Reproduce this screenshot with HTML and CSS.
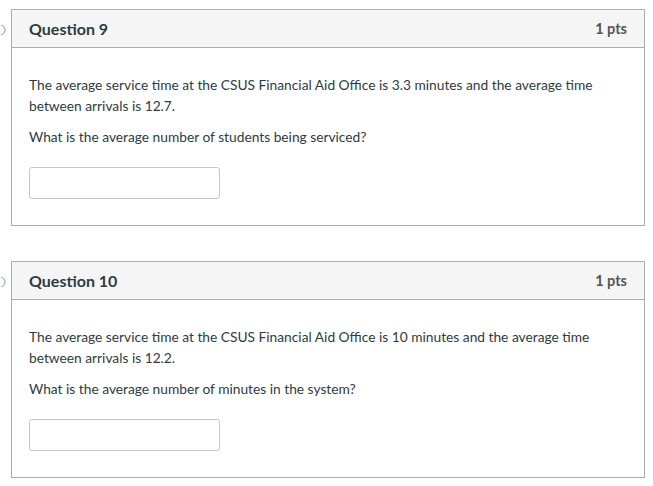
FILE: index.html
```html
<!DOCTYPE html>
<html>
<head>
<meta charset="utf-8">
<link rel="stylesheet" href="styles.css">
</head>
<body>
<div class="page">
  <div class="question">
    <svg class="flag" width="6" height="12" viewBox="0 0 6 12"><path d="M-4 1.5 H1 Q2 1.5 3 3 L4.3 6 L3 9 Q2 10.5 1 10.5 H-4" fill="none" stroke="#8fb3cc" stroke-width="1.2"/></svg>
    <div class="q-header">
      <span class="q-title">Question 9</span>
      <span class="q-pts">1 pts</span>
    </div>
    <div class="q-body">
      <p>The average service time at the CSUS Financial Aid Office is 3.3 minutes and the average time between arrivals is 12.7.</p>
      <p>What is the average number of students being serviced?</p>
      <input class="answer" type="text">
    </div>
  </div>
  <div class="question">
    <svg class="flag" width="6" height="12" viewBox="0 0 6 12"><path d="M-4 1.5 H1 Q2 1.5 3 3 L4.3 6 L3 9 Q2 10.5 1 10.5 H-4" fill="none" stroke="#8fb3cc" stroke-width="1.2"/></svg>
    <div class="q-header">
      <span class="q-title">Question 10</span>
      <span class="q-pts">1 pts</span>
    </div>
    <div class="q-body">
      <p>The average service time at the CSUS Financial Aid Office is 10 minutes and the average time between arrivals is 12.2.</p>
      <p>What is the average number of minutes in the system?</p>
      <input class="answer" type="text">
    </div>
  </div>
</div>
</body>
</html>
```

FILE: styles.css
```css
html, body {
  margin: 0;
  padding: 0;
  background: #ffffff;
}
body {
  font-family: Lato, "Open Sans", sans-serif;
  color: #2d3b45;
}
.page {
  padding: 9px 0 0 11px;
  display: flex;
  flex-direction: column;
  gap: 35px;
}
.question {
  position: relative;
  width: 632px;
  border: 1px solid #adadad;
}
.flag {
  position: absolute;
  left: -11px;
  top: 14px;
}
.q-header {
  display: flex;
  justify-content: space-between;
  align-items: center;
  height: 37px;
  padding: 0 17px;
  background: #f5f5f5;
  border-bottom: 1px solid #adadad;
}
.q-title {
  font-size: 16px;
  font-weight: 700;
  color: #2d3b45;
}
.q-pts {
  font-size: 14.5px;
  font-weight: 700;
  color: #555555;
}
.q-body {
  padding: 26px 17px 26px;
  display: flex;
  flex-direction: column;
  align-items: flex-start;
  font-size: 13.75px;
  line-height: 21px;
  color: #2d3b45;
}
.q-body p {
  margin: 0 0 10px;
  max-width: 600px;
}
.q-body p + p {
  margin-bottom: 20px;
}
.answer {
  box-sizing: border-box;
  width: 191px;
  height: 32px;
  margin: 0;
  border: 1px solid #c7c7c7;
  border-radius: 3px;
  background: #fff;
  font-family: inherit;
}
```
